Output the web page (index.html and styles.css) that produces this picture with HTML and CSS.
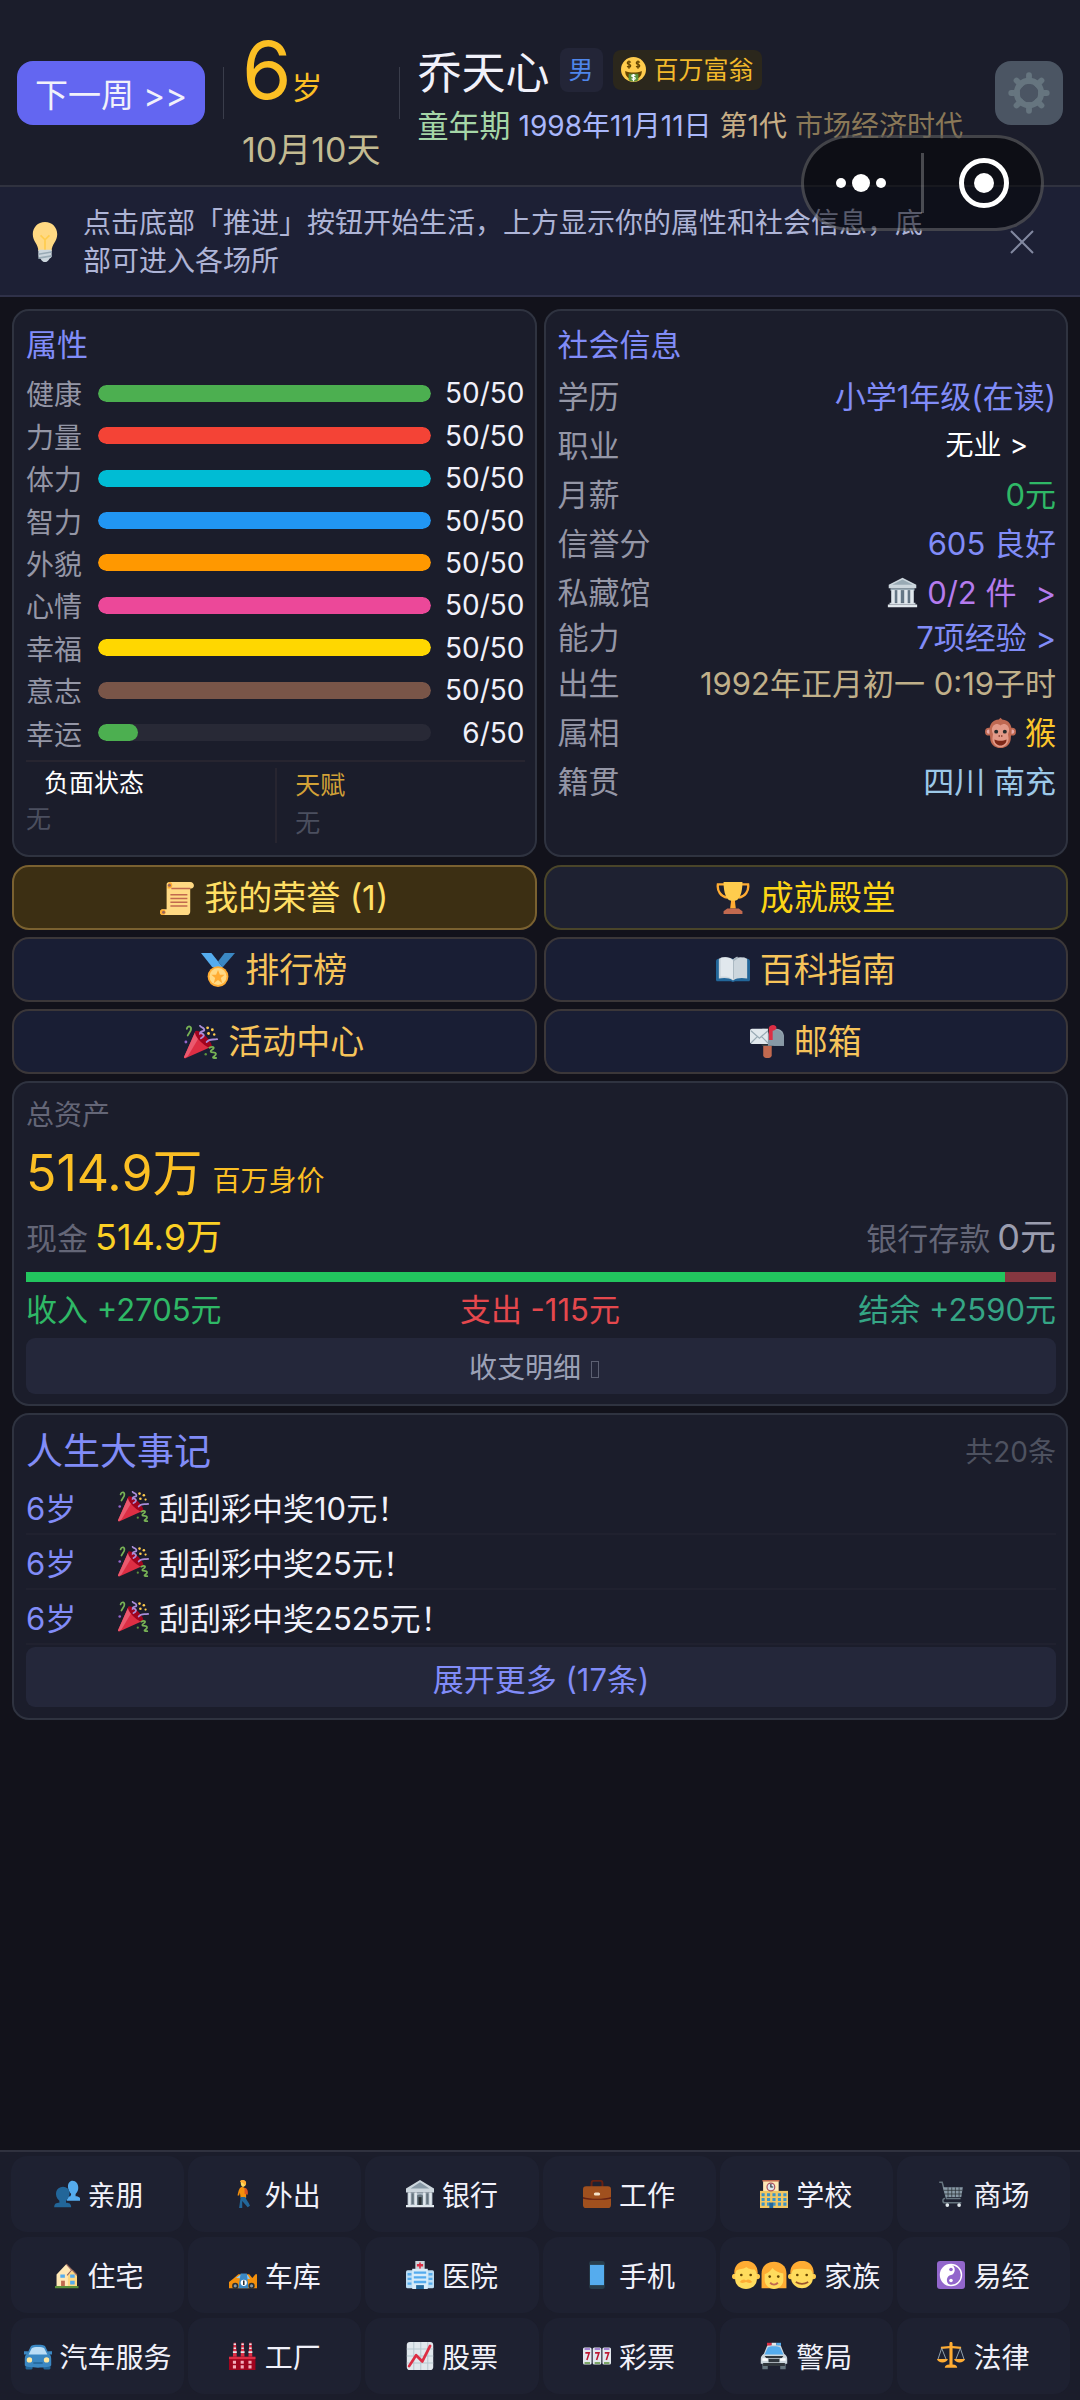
FILE: index.html
```html
<!DOCTYPE html>
<html lang="zh-CN">
<head>
  <meta charset="UTF-8">
  <title>人生模拟</title>
  <meta name="viewport" content="width=device-width, initial-scale=1.0">
  <link rel="stylesheet" href="styles.css">
</head>
<body>

<!-- 图标 -->
<svg class="sprite" aria-hidden="true">
  <symbol id="i-bulb" viewBox="0 0 36 36">
    <path fill="#ffd983" d="M29 11.1C29 5 24.500 0 18 0S7 5 7 11.100c0 6.500 5 9 5 14.900h12c0-5.900 5-8.400 5-14.900z"/>
    <path fill="none" stroke="#ffcc4d" stroke-width="1.500" d="M18 26V16l-4-4M18 16l4-4"/>
    <path fill="#ccd6dd" d="M12 25h12v6c0 1-2 2-2 2-1 2-2.500 3-4 3s-3-1-4-3c0 0-2-1-2-2z"/>
    <path stroke="#99aab5" stroke-width="1.500" d="M12 29l12-2M12 32.500l12-2"/>
  </symbol>
  <symbol id="i-money" viewBox="0 0 36 36">
    <circle cx="18" cy="18" r="18" fill="#ffcc4d"/>
    <path fill="#664500" d="M6 20c7 3 17 3 24 0 0 8-5 12-12 12S6 28 6 20z"/>
    <path fill="#5c913b" d="M11 24h14v9c-4 3-10 3-14 0z"/>
    <path fill="none" stroke="#664500" stroke-width="1.800" d="M14 8c-1-2-5-2-5 .5s5 1.500 5 4-4 3-5 .5M11.500 5v12M27 8c-1-2-5-2-5 .5s5 1.500 5 4-4 3-5 .5M24.500 5v12"/>
    <path fill="none" stroke="#fff" stroke-width="1.800" d="M20.500 27c-1-2-5-1.500-5 .3s5 1.200 5 3.200-4 2.500-5 .5M18 24.500V35"/>
  </symbol>
  <symbol id="i-gear" viewBox="0 0 36 36">
    <g stroke="#66757f" stroke-width="5" stroke-linecap="round">
      <path d="M18 2.800v5M18 28.200v5M2.800 18h5M28.200 18h5M7.300 7.300l3.500 3.500M25.200 25.200l3.500 3.500M7.300 28.700l3.500-3.500M25.200 10.800l3.500-3.500"/>
    </g>
    <circle cx="18" cy="18" r="10.500" fill="none" stroke="#66757f" stroke-width="5"/>
  </symbol>
  <symbol id="i-museum" viewBox="0 0 36 36">
    <path fill="#ccd6dd" d="M18 1l16 8v4H2V9zM3 30h30v2H3z"/>
    <path fill="#99aab5" d="M18 3l12 6H6zM4 13h28v3H4z"/>
    <path fill="#657786" d="M5 16h26v14H5z"/>
    <path fill="#e1e8ed" d="M5 15h4v16H5zM12 15h4v16h-4zM20 15h4v16h-4zM27 15h4v16h-4zM1 32h34v3H1z"/>
  </symbol>
  <symbol id="i-monkey" viewBox="0 0 36 36">
    <circle cx="4.500" cy="17" r="4.500" fill="#bf6952"/><circle cx="31.500" cy="17" r="4.500" fill="#bf6952"/>
    <circle cx="4.500" cy="17" r="2.500" fill="#e6aaaa"/><circle cx="31.500" cy="17" r="2.500" fill="#e6aaaa"/>
    <path fill="#bf6952" d="M18 1l2 2c8 1 11 6 11 13 0 3-1 5-1 8 0 7-5 12-12 12S6 31 6 24c0-3-1-5-1-8C5 9 9 3 16 3z"/>
    <path fill="#e39a88" d="M18 10c4-4 10-1 10 5 0 3-2 4-1 7 2 8-4 13-9 13s-11-5-9-13c1-3-1-4-1-7 0-6 6-9 10-5z"/>
    <circle cx="13" cy="17" r="2.300" fill="#272b2b"/><circle cx="23" cy="17" r="2.300" fill="#272b2b"/>
    <path fill="#7d2818" d="M11 26c4 2 10 2 14 0 0 4-3 7-7 7s-7-3-7-7z"/>
    <circle cx="16.500" cy="22" r=".9" fill="#662113"/><circle cx="19.500" cy="22" r=".9" fill="#662113"/>
  </symbol>
  <symbol id="i-scroll" viewBox="0 0 36 36">
    <path fill="#ffd983" d="M10 1h22c5 0 5 7 1 7h-1v24c0 2-1 4-3 4H3c-4 0-4-6 0-6h4V4c0-2 1-3 3-3z"/>
    <path fill="#ffac33" d="M10 1c4 0 4 7 0 7H8V4zM3 30c4 0 4 6 0 6s-4-6 0-6z"/>
    <circle cx="10" cy="4.500" r="1.600" fill="#99655b"/><circle cx="3.800" cy="33" r="1.600" fill="#99655b"/>
    <path stroke="#c1694f" stroke-width="1.600" d="M12 8h20M11 14.500h18M11 18.500h18M11 22.500h18M11 26.500h18"/>
  </symbol>
  <symbol id="i-trophy" viewBox="0 0 36 36">
    <path fill="none" stroke="#ffac33" stroke-width="2.500" d="M9 3.500H2c-1 7 3 13 10 14M27 3.500h7c1 7-3 13-10 14"/>
    <path fill="#ffcc4d" d="M8 1h20c0 12-3 19-8 20v6h-4v-6C11 20 8 13 8 1z"/>
    <path fill="#ffac33" d="M16 21h4l1 8h-6z"/>
    <path fill="#c1694f" d="M12 29h12l4 3v3H8v-3z"/>
  </symbol>
  <symbol id="i-medal" viewBox="0 0 36 36">
    <path fill="#55acee" d="M0 0h11l12 15H12z"/>
    <path fill="#3b88c3" d="M25 0h11L23 15l-5-6z"/>
    <circle cx="18" cy="25" r="11" fill="#ffac33"/><circle cx="18" cy="25" r="9" fill="#ffd983"/>
    <path fill="#ffac33" d="M18 18l2 5h5l-4 3.500 1.500 5.500-4.500-3.300-4.500 3.300 1.500-5.500-4-3.500h5z"/>
  </symbol>
  <symbol id="i-book" viewBox="0 0 36 36">
    <path fill="#226699" d="M0 9c0-2 1-3 3-3h30c2 0 3 1 3 3v19c0 2-1 2-3 2H20c-1 1-3 1-4 0H3c-2 0-3 0-3-2z"/>
    <path fill="#ccd6dd" d="M3 6c5-2 11-2 15 1 4-3 10-3 15-1v21c-5-1-11-1-15 2-4-3-10-3-15-2z"/>
    <path fill="#e1e8ed" d="M5 5c5-1 9-1 13 3v20c-4-3-8-3-13-3z"/>
    <path fill="#aab8c2" d="M18 8c0-2 3-4 5-4v20c-2 0-4 2-5 4z"/>
    <path fill="#ccd6dd" d="M19 9c2-3 8-4 12-4v20c-4 0-9 0-12 3z"/>
  </symbol>
  <symbol id="i-mail" viewBox="0 0 36 36">
    <path fill="#c1694f" d="M14 21h9v11c0 4-9 4-9 0z"/>
    <path fill="#99aab5" d="M13 4h15c5 0 8 4 8 9v9H13z"/>
    <path fill="#292f33" d="M12 22V10c0-9 13-9 13 0v12z"/>
    <path fill="#8899a6" d="M19 22V11c0-8 14-9 17 2v9z"/>
    <path fill="#e1e8ed" d="M0 6c0-1 1-2 2-2h17v16H2c-1 0-2-1-2-2z"/>
    <path fill="none" stroke="#99aab5" stroke-width="1.300" d="M1 6l9 8 9-8M1 19l7-7M19 19l-7-7"/>
    <path fill="#dd2e44" d="M20 3c1-4 8-4 8 0 0 2-2 3-4 3v10h-4z"/>
  </symbol>
  <symbol id="i-party" viewBox="0 0 36 36">
    <path fill="#dd2e44" d="M12 7l17 16L2 35c-1 1-2 0-2-1z"/>
    <path fill="#ea596e" d="M12 7l4 6L4 33l-3 2c-1 0-1-1-1-1z"/>
    <ellipse cx="20.500" cy="15" rx="4" ry="12" fill="#a0041e" transform="rotate(-45 20.500 15)"/>
    <path fill="none" stroke="#aa8dd8" stroke-width="2" stroke-linecap="round" d="M18 14c6-3 1-6-1-5 0-4 6-1 4-5-1-2-3-1-4-3M24 18c3-4 6-2 11-3"/>
    <path fill="none" stroke="#77b255" stroke-width="2" stroke-linecap="round" d="M3 4c1-4 6-3 4 2l-3 5M27 24c4-2 6 0 3 2s-2 3 1 3 4 2 1 4 0 2 2 2"/>
    <g fill="#ffcc4d"><circle cx="25" cy="3" r="1.500"/><circle cx="30" cy="5" r="1.500"/><circle cx="26" cy="9" r="1.500"/><circle cx="32" cy="10" r="1.300"/></g>
    <circle cx="2" cy="18" r="1.500" fill="#9266cc"/><circle cx="23" cy="31" r="1.300" fill="#5c913b"/>
  </symbol>
  <symbol id="i-people" viewBox="-3 0 38 38">
    <path fill="#55acee" d="M17 28c0-4 2-6 5-6l1-3C16 12 18 1 25 1s11 11 4 18v3c4 0 7 2 7 6z"/>
    <path fill="#226699" d="M0 37c0-5 3-6 7-6v-3C-1 21 2 9 12 9s12 12 4 19v3c4 0 7 1 7 6z"/>
  </symbol>
  <symbol id="i-walk" viewBox="0 0 36 36">
    <path fill="#ffdc5d" d="M15 2c0-3 7-2 7 2 0 3-2 5-4 5s-3-3-3-7z"/><path fill="#ffac33" d="M14 2c1-3 8-3 8 2l-1 3-3-3z"/>
    <path fill="#f4900c" d="M16 9c4-1 6 3 6 8v6h-7l-1-7-1 4h-2c1-5 2-10 5-11z"/>
    <path fill="#dd551f" d="M20 10c3 0 5 4 4 9l-4-1z"/>
    <path fill="#226699" d="M15 22h6c1 4 4 6 6 11l-3 2-7-8v9h-4z"/>
  </symbol>
  <symbol id="i-bank" viewBox="0 0 36 36">
    <path fill="#ccd6dd" d="M18 0l18 11v5H0v-5z"/><path fill="#8899a6" d="M18 3l12 8H6z"/>
    <path fill="#aab8c2" d="M2 16h32v16H2z"/>
    <path fill="#66757f" d="M7 17h3v14H7zM26 17h3v14h-3zM14 20c2-2 6-2 8 0v12h-8z"/>
    <path fill="#e1e8ed" d="M3 16h3v16H3zM11 16h3v16h-3zM22 16h3v16h-3zM30 16h3v16h-3zM0 32h36v3H0z"/>
    <path fill="#292f33" d="M16 22h4v10h-4z"/>
  </symbol>
  <symbol id="i-case" viewBox="0 0 36 36">
    <path fill="none" stroke="#662113" stroke-width="2.500" d="M11 9V4c0-2 1-3 3-3h8c2 0 3 1 3 3v5"/>
    <rect y="8" width="36" height="28" rx="4" fill="#a0501e"/>
    <path fill="#662113" d="M0 22c8 3 28 3 36 0v2c-8 2-28 2-36 0z"/>
    <rect x="14" y="16" width="8" height="4" rx="2" fill="#f5e2c8"/>
  </symbol>
  <symbol id="i-school" viewBox="0 0 36 36">
    <path fill="#ffe8b6" d="M4 0h20v16H4z"/><path fill="#c1694f" d="M3 0h22v2H3z"/>
    <path fill="#f2c762" d="M0 14h36v22H0z"/>
    <circle cx="14" cy="9" r="5" fill="#e1e8ed" stroke="#a8525f" stroke-width="1.500"/><path fill="none" stroke="#292f33" stroke-width="1.500" d="M14 5v4h3"/>
    <path stroke="#3b94c8" stroke-width="4" stroke-dasharray="4 3" d="M2 19h32M2 25h32M2 31h32"/>
    <path fill="#226699" d="M12 29h5v7h-5z"/>
  </symbol>
  <symbol id="i-cart" viewBox="-2 -1 38 38">
    <path fill="none" stroke="#66757f" stroke-width="2" d="M1 2h4l6 22h19M9 24c-4 0-4 6 0 6h22"/>
    <path fill="#8899a6" d="M6 9h27l-2 13H10z"/>
    <path stroke="#292f33" stroke-width="1" d="M7 13h25M8 18h24M13 9v13M18 9v13M23 9v13M28 9v13"/>
    <circle cx="12" cy="33" r="2.500" fill="#e1e8ed"/><circle cx="28" cy="33" r="2.500" fill="#e1e8ed"/>
  </symbol>
  <symbol id="i-house" viewBox="-4 0 37 37">
    <path fill="#5c913b" d="M0 33h31v3H0z"/>
    <path fill="#ffe8b6" d="M2 18L15 4l5 5 9 9v15H2z"/>
    <path fill="#ffd983" d="M17 19l6-6 6 6v14H17z"/>
    <path fill="none" stroke="#99655b" stroke-width="1.500" d="M15 4l7 8-6 7M23 12l6 7"/>
    <path fill="#55acee" d="M7 18h6v4H7zM20 18h6v4h-6zM20 26h6v5h-6z"/><path fill="#c1694f" d="M8 26h5v7H8z"/>
  </symbol>
  <symbol id="i-race" viewBox="0 0 36 36">
    <path fill="#f4900c" d="M0 35v-8l5-4 7-6h14l4 5 4-5h2v18z"/>
    <path fill="#8ccaf7" d="M9 22l5-4h10l3 5z"/><path fill="#3b88c3" d="M12 35l3-19h8l2 19z"/>
    <circle cx="19" cy="28" r="4" fill="#fff"/><path stroke="#292f33" stroke-width="2" d="M19 25v6"/>
    <g fill="#292f33"><circle cx="8" cy="32" r="4"/><circle cx="29" cy="32" r="4"/></g>
    <g fill="#8899a6"><circle cx="8" cy="32" r="2"/><circle cx="29" cy="32" r="2"/></g>
  </symbol>
  <symbol id="i-hospital" viewBox="0 0 36 36">
    <path fill="#ccd6dd" d="M12 0h12v11H12z"/><path fill="#dd2e44" d="M17 2h2v2h3v3h-3v3h-2V7h-3V4h3z"/>
    <rect y="12" width="36" height="23" rx="2" fill="#bbddf5"/><path fill="#d9edfa" d="M8 10h20v26H8z"/>
    <path stroke="#55acee" stroke-width="3" d="M2 17h5M2 23h5M2 29h5M29 17h5M29 23h5M29 29h5M10 15h16M10 21h16M10 27h16"/>
    <path fill="#226699" d="M13 31h10v5H13z"/>
  </symbol>
  <symbol id="i-phone" viewBox="0 0 36 36">
    <rect x="8" width="20" height="36" rx="3" fill="#283d4b"/><path fill="#55acee" d="M9 5h18v26H9z"/>
  </symbol>
  <symbol id="i-man" viewBox="0 0 36 36">
    <circle cx="3.500" cy="20" r="3.500" fill="#ffcc4d"/><circle cx="32.500" cy="20" r="3.500" fill="#ffcc4d"/>
    <path fill="#ffdc5d" d="M4 13C4-1 32-1 32 13v10c0 8-7 13-14 13S4 31 4 23z"/>
    <path fill="#ffac33" d="M3 17C1-6 35-6 33 17l-4-6c-8 0-9-3-11-3-4 3-9 2-12 4z"/>
    <circle cx="12" cy="18" r="1.700" fill="#664500"/><circle cx="24" cy="18" r="1.700" fill="#664500"/>
    <path fill="#ffac33" d="M10 27c3-4 6-4 8-2 2-2 5-2 8 2-3 2-6 1-8 0-2 1-5 2-8 0z"/>
  </symbol>
  <symbol id="i-woman" viewBox="0 0 36 36">
    <path fill="#ffac33" d="M2 35V16C2-4 34-4 34 16v19z"/>
    <path fill="#ffdc5d" d="M6 17c5-2 8-5 10-8 3 4 8 6 14 7v8c0 7-6 12-12 12S6 31 6 24z"/>
    <circle cx="12.500" cy="20" r="1.700" fill="#664500"/><circle cx="23.500" cy="20" r="1.700" fill="#664500"/>
    <path fill="none" stroke="#c1694f" stroke-width="2.500" d="M13 28c3 3 7 3 10 0"/>
  </symbol>
  <symbol id="i-boy" viewBox="0 0 36 36">
    <circle cx="3.500" cy="20" r="3.500" fill="#ffcc4d"/><circle cx="32.500" cy="20" r="3.500" fill="#ffcc4d"/>
    <path fill="#ffdc5d" d="M4 13C4-1 32-1 32 13v9c0 8-7 13-14 13S4 30 4 22z"/>
    <path fill="#ffac33" d="M3 17C1-6 35-6 33 17l-4-6c-9-1-15-2-22 0z"/>
    <circle cx="12" cy="18" r="1.700" fill="#664500"/><circle cx="24" cy="18" r="1.700" fill="#664500"/>
    <path fill="none" stroke="#99552d" stroke-width="2" d="M10 27c5 3 11 3 16 0"/>
  </symbol>
  <symbol id="i-yinyang" viewBox="0 0 36 36">
    <rect width="36" height="36" rx="4" fill="#9266cc"/>
    <circle cx="18" cy="18" r="13.500" fill="none" stroke="#fff" stroke-width="1.800"/>
    <path fill="#fff" d="M18 4.500a13.500 13.500 0 000 27c-8-3-6-13 0-13.500 6-1 7-11 0-13.500z"/>
    <circle cx="18" cy="11" r="2.300" fill="#9266cc"/><circle cx="18" cy="25" r="2.300" fill="#fff"/>
  </symbol>
  <symbol id="i-car" viewBox="0 0 36 36">
    <path fill="#226699" d="M2 28h9v6c0 2-9 2-9 0zM25 28h9v6c0 2-9 2-9 0z"/>
    <path fill="#3b88c3" d="M9 5c2-2 16-2 18 0l5 10c3 2 3 5 3 8v7c-1 4-33 4-34 0v-7c0-3 0-6 3-8z"/>
    <path fill="#bbddf5" d="M10 8c2-2 14-2 16 0l4 8H6z"/>
    <path fill="#3b88c3" d="M0 12h5v4H0zM31 12h5v4h-5z"/>
    <circle cx="7" cy="23" r="3.500" fill="#ffe8a0"/><circle cx="29" cy="23" r="3.500" fill="#ffe8a0"/>
    <path stroke="#226699" stroke-width="2" d="M12 27h12"/>
  </symbol>
  <symbol id="i-factory" viewBox="0 0 36 36">
    <path fill="#dd2e44" d="M5 19L6 1h3l1 18zM15 19l1-18h3l1 18zM25 19l1-18h3l1 18z"/>
    <path fill="none" stroke="#e1e8ed" stroke-width="2" d="M6 3h3M6 8h3M5 13h5M16 3h3M16 8h3M15 13h5M26 3h3M26 8h3M25 13h5"/>
    <path fill="#a0041e" d="M0 19h34v17H0z"/><path fill="#dd2e44" d="M0 19h34v3H0z"/>
    <path stroke="#f4abba" stroke-width="4" stroke-dasharray="4 6" d="M5 26h24M5 32h24"/>
  </symbol>
  <symbol id="i-chart" viewBox="0 0 36 36">
    <rect x="1" y="0" width="34" height="36" rx="4" fill="#e1e8ed"/>
    <path stroke="#b8c7d0" stroke-width="1.300" d="M1 9h34M1 18h34M1 27h34M10 0v36M19 0v36M28 0v36"/>
    <path fill="none" stroke="#dd2e44" stroke-width="3.500" stroke-linecap="round" stroke-linejoin="round" d="M4 31l9-14 8 8L31 5"/>
  </symbol>
  <symbol id="i-slots" viewBox="0 0 36 36">
    <rect y="7" width="11" height="22" rx="2" fill="#e1e8ed"/><rect x="12.500" y="7" width="11" height="22" rx="2" fill="#e1e8ed"/><rect x="25" y="7" width="11" height="22" rx="2" fill="#e1e8ed"/>
    <path stroke="#9266cc" stroke-width="2" d="M2 9h7M15 9h7M27 9h7"/>
    <path stroke="#5c913b" stroke-width="2" d="M2 27h7M15 27h7M27 27h7"/>
    <path fill="none" stroke="#be1931" stroke-width="2" d="M3 14h5L5 23M15.500 14h5l-3 9M28 14h5l-3 9"/>
  </symbol>
  <symbol id="i-police" viewBox="0 0 36 36">
    <path fill="#dd2e44" d="M9 1h6v4H9z"/><path fill="#e1e8ed" d="M15 1h6v4h-6z"/><path fill="#55acee" d="M21 1h6v4h-6z"/>
    <path fill="#66757f" d="M3 27h7v8H3zM26 27h7v8h-7z"/>
    <path fill="#ccd6dd" d="M9 5c2-1 16-1 18 0l4 10c3 2 4 4 4 7v6H1v-6c0-3 1-5 4-7z"/>
    <path fill="#55acee" d="M10 7c3-2 13-2 16 0l4 9H6z"/>
    <path fill="#31373d" d="M6 18h24l-2 3H8zM4 27h28v4H4zM11 22h14v4H11z"/>
    <path fill="#fff" d="M3 21h7v3H3zM26 21h7v3h-7z"/>
  </symbol>
  <symbol id="i-scales" viewBox="0 0 36 36">
    <path fill="#ffac33" d="M16 2c0-3 4-3 4 0v3l11 1v3l-11-1v21c4 0 6 2 6 4H10c0-2 2-4 6-4V8L5 9V6l11-1z"/>
    <path fill="none" stroke="#99aab5" stroke-width="1.200" d="M6 8L1 23M6 8l6 15M30 8l-6 15M30 8l5 15"/>
    <path fill="#ffac33" d="M0 22h14c-1 6-13 6-14 0zM22 22h14c-1 6-13 6-14 0z"/>
  </symbol>
</svg>

<header class="topbar">
  <button class="next-btn">下一周 &gt;&gt;</button>
  <span class="divider"></span>
  <div class="age">
    <div class="age-num">6<small>岁</small></div>
    <div class="age-date">10月10天</div>
  </div>
  <span class="divider"></span>
  <div class="profile">
    <div class="profile-main">
      <h1 class="name">乔天心</h1>
      <span class="gender">男</span>
      <span class="badge"><svg class="icon"><use href="#i-money"/></svg>百万富翁</span>
    </div>
    <div class="profile-sub">
      <span class="stage">童年期</span>
      <span class="date">1998年11月11日</span>
      <span class="generation">第1代</span>
      <span class="era">市场经济时代</span>
    </div>
  </div>
  <button class="gear-btn" aria-label="设置"><svg class="icon"><use href="#i-gear"/></svg></button>
  <div class="capsule">
    <button aria-label="更多">
      <svg width="50" height="20" viewBox="0 0 50 20" fill="#fff"><circle cx="5" cy="10" r="5"/><circle cx="25" cy="10" r="9"/><circle cx="45" cy="10" r="5"/></svg>
    </button>
    <button aria-label="关闭小程序">
      <svg width="50" height="50" viewBox="0 0 50 50" fill="#fff"><circle cx="25" cy="25" r="22.500" fill="none" stroke="#fff" stroke-width="5"/><circle cx="25" cy="25" r="10"/></svg>
    </button>
  </div>
</header>

<div class="tip">
  <svg class="icon tip-icon"><use href="#i-bulb"/></svg>
  <p>点击底部「推进」按钮开始生活，上方显示你的属性和社会信息，底部可进入各场所</p>
  <button class="tip-close" aria-label="关闭提示">
    <svg width="24" height="24" viewBox="0 0 24 24"><path d="M1 1l22 22M23 1L1 23" stroke="#8288a0" stroke-width="2"/></svg>
  </button>
</div>

<main class="content">
  <div class="columns">
    <section class="card">
      <h2 class="card-title">属性</h2>
      <ul class="stats">
        <li><span>健康</span><div class="bar"><div class="fill green" style="width: 100%"></div></div><b>50/50</b></li>
        <li><span>力量</span><div class="bar"><div class="fill red" style="width: 100%"></div></div><b>50/50</b></li>
        <li><span>体力</span><div class="bar"><div class="fill cyan" style="width: 100%"></div></div><b>50/50</b></li>
        <li><span>智力</span><div class="bar"><div class="fill blue" style="width: 100%"></div></div><b>50/50</b></li>
        <li><span>外貌</span><div class="bar"><div class="fill orange" style="width: 100%"></div></div><b>50/50</b></li>
        <li><span>心情</span><div class="bar"><div class="fill pink" style="width: 100%"></div></div><b>50/50</b></li>
        <li><span>幸福</span><div class="bar"><div class="fill yellow" style="width: 100%"></div></div><b>50/50</b></li>
        <li><span>意志</span><div class="bar"><div class="fill brown" style="width: 100%"></div></div><b>50/50</b></li>
        <li><span>幸运</span><div class="bar"><div class="fill green" style="width: 12%"></div></div><b>6/50</b></li>
      </ul>
      <div class="extras">
        <div class="extra">
          <button class="debuff-btn">负面状态</button>
          <p class="empty">无</p>
        </div>
        <div class="extra">
          <h3 class="talent">天赋</h3>
          <p class="empty">无</p>
        </div>
      </div>
    </section>

    <section class="card">
      <h2 class="card-title">社会信息</h2>
      <dl class="info">
        <div><dt>学历</dt><dd class="indigo">小学1年级(在读)</dd></div>
        <div><dt>职业</dt><dd><button class="job-btn">无业 &gt;</button></dd></div>
        <div><dt>月薪</dt><dd class="money">0元</dd></div>
        <div><dt>信誉分</dt><dd class="indigo">605 良好</dd></div>
        <div><dt>私藏馆</dt><dd><a href="#" class="purple"><svg class="icon"><use href="#i-museum"/></svg>0/2 件 <i>&gt;</i></a></dd></div>
        <div class="tight"><dt>能力</dt><dd><a href="#" class="indigo">7项经验 &gt;</a></dd></div>
        <div><dt>出生</dt><dd class="tan">1992年正月初一 0:19子时</dd></div>
        <div><dt>属相</dt><dd class="gold"><svg class="icon"><use href="#i-monkey"/></svg>猴</dd></div>
        <div><dt>籍贯</dt><dd class="sky">四川 南充</dd></div>
      </dl>
    </section>
  </div>

  <div class="links">
    <button class="link-btn honor"><svg class="icon"><use href="#i-scroll"/></svg>我的荣誉 (1)</button>
    <button class="link-btn hall"><svg class="icon"><use href="#i-trophy"/></svg>成就殿堂</button>
    <button class="link-btn"><svg class="icon"><use href="#i-medal"/></svg>排行榜</button>
    <button class="link-btn"><svg class="icon"><use href="#i-book"/></svg>百科指南</button>
    <button class="link-btn"><svg class="icon"><use href="#i-party"/></svg>活动中心</button>
    <button class="link-btn"><svg class="icon"><use href="#i-mail"/></svg>邮箱</button>
  </div>

  <section class="card assets">
    <h2 class="assets-label">总资产</h2>
    <div class="total">514.9万<small>百万身价</small></div>
    <div class="row cash">
      <span>现金<b class="cash-num">514.9万</b></span>
      <span>银行存款<b>0元</b></span>
    </div>
    <div class="flow"><div class="flow-in" style="width: 95%"></div></div>
    <div class="row flow-text">
      <span class="money">收入 +2705元</span>
      <span class="expense">支出 -115元</span>
      <span class="balance">结余 +2590元</span>
    </div>
    <button class="wide-btn detail-btn">收支明细 <span class="caret"></span></button>
  </section>

  <section class="card events">
    <div class="row events-head">
      <h2>人生大事记</h2>
      <span>共20条</span>
    </div>
    <ul class="event-list">
      <li><span>6岁</span><svg class="icon"><use href="#i-party"/></svg>刮刮彩中奖10元！</li>
      <li><span>6岁</span><svg class="icon"><use href="#i-party"/></svg>刮刮彩中奖25元！</li>
      <li><span>6岁</span><svg class="icon"><use href="#i-party"/></svg>刮刮彩中奖2525元！</li>
    </ul>
    <button class="wide-btn more-btn">展开更多 (17条)</button>
  </section>
</main>

<nav class="places">
  <button><svg class="icon"><use href="#i-people"/></svg>亲朋</button>
  <button><svg class="icon"><use href="#i-walk"/></svg>外出</button>
  <button><svg class="icon"><use href="#i-bank"/></svg>银行</button>
  <button><svg class="icon"><use href="#i-case"/></svg>工作</button>
  <button><svg class="icon"><use href="#i-school"/></svg>学校</button>
  <button><svg class="icon"><use href="#i-cart"/></svg>商场</button>
  <button><svg class="icon"><use href="#i-house"/></svg>住宅</button>
  <button><svg class="icon"><use href="#i-race"/></svg>车库</button>
  <button><svg class="icon"><use href="#i-hospital"/></svg>医院</button>
  <button><svg class="icon"><use href="#i-phone"/></svg>手机</button>
  <button><span class="family"><svg class="icon"><use href="#i-man"/></svg><svg class="icon"><use href="#i-woman"/></svg><svg class="icon"><use href="#i-boy"/></svg></span>家族</button>
  <button><svg class="icon"><use href="#i-yinyang"/></svg>易经</button>
  <button><svg class="icon"><use href="#i-car"/></svg>汽车服务</button>
  <button><svg class="icon"><use href="#i-factory"/></svg>工厂</button>
  <button><svg class="icon"><use href="#i-chart"/></svg>股票</button>
  <button><svg class="icon"><use href="#i-slots"/></svg>彩票</button>
  <button><svg class="icon"><use href="#i-police"/></svg>警局</button>
  <button><svg class="icon"><use href="#i-scales"/></svg>法律</button>
</nav>

</body>
</html>
```
FILE: styles.css
```css
* {
  box-sizing: border-box;
}
html, body {
  height: 100%;
  margin: 0;
}
body {
  display: flex;
  flex-direction: column;
  min-height: 100vh;
  background: #12121b;
  color: #f1f1fa;
  font-family: Inter, "Noto Sans CJK SC", sans-serif;
  font-size: 28px;
}
h1, h2, h3, p, ul, dl, dd {
  margin: 0;
  padding: 0;
  font-weight: 400;
}
ul {
  list-style: none;
}
b, i {
  font-weight: 400;
  font-style: normal;
}
a {
  color: inherit;
  text-decoration: none;
}
button {
  margin: 0;
  padding: 0;
  border: none;
  background: none;
  color: inherit;
  font: inherit;
  white-space: nowrap;
  cursor: pointer;
}
.sprite {
  position: absolute;
  width: 0;
  height: 0;
}
.icon {
  width: 1em;
  height: 1em;
  flex: none;
}
.row {
  display: flex;
  align-items: center;
  justify-content: space-between;
}

/* header */
.topbar {
  position: relative;
  display: flex;
  align-items: center;
  gap: 18px;
  height: 187px;
  padding: 0 17px;
  background: #1b1d2b;
  border-bottom: 2px solid #30323f;
  white-space: nowrap;
}
.next-btn {
  flex: none;
  width: 188px;
  height: 64px;
  border-radius: 16px;
  background: #6366f1;
  font-size: 33px;
}
.divider {
  width: 1px;
  height: 52px;
  background: #3a3d4b;
}
.age-num {
  color: #fbbf24;
  font-size: 80px;
  line-height: 114px;
}
.age-num small {
  font-size: 31px;
  line-height: 1;
}
.age-date {
  color: #c3bb92;
  font-size: 34px;
  line-height: 46px;
}
.profile {
  flex: 1;
}
.profile-main {
  display: flex;
  align-items: center;
  gap: 10px;
  height: 66px;
}
.name {
  font-size: 44px;
}
.gender {
  padding: 0 9px;
  border-radius: 8px;
  background: #232537;
  color: #4f86ea;
  font-size: 25px;
  line-height: 44px;
}
.badge {
  display: flex;
  align-items: center;
  gap: 8px;
  padding: 0 8px;
  border-radius: 8px;
  background: #2b271c;
  color: #f2b92b;
  font-size: 25px;
  line-height: 40px;
}
.profile-sub {
  display: flex;
  gap: 8px;
  line-height: 46px;
}
.stage {
  color: #a5d6a7;
  font-size: 31px;
}
.date {
  color: #a9b7fb;
}
.generation {
  color: #c6ad85;
}
.era {
  color: #8a7857;
}
.gear-btn {
  display: flex;
  align-items: center;
  justify-content: center;
  width: 68px;
  height: 64px;
  border-radius: 16px;
  background: #4b5563;
  font-size: 42px;
}
.capsule {
  position: absolute;
  top: 135px;
  right: 36px;
  z-index: 10;
  display: flex;
  width: 243px;
  height: 96px;
  border: 3px solid rgba(255, 255, 255, .22);
  border-radius: 48px;
  background: rgba(0, 0, 0, .5);
}
.capsule button {
  display: flex;
  flex: 1;
  align-items: center;
  justify-content: center;
  padding-right: 4px;
}
.capsule button + button {
  position: relative;
  padding: 0 0 0 4px;
}
.capsule button + button::before {
  content: "";
  position: absolute;
  left: -2px;
  top: 15px;
  bottom: 15px;
  width: 3px;
  background: rgba(255, 255, 255, .25);
}

/* tip */
.tip {
  display: flex;
  align-items: center;
  height: 110px;
  padding: 2px 46px 0 25px;
  background: #1d2035;
  border-bottom: 2px solid #2f3149;
  color: #aeb4d6;
  line-height: 38px;
}
.tip-icon {
  width: 40px;
  height: 40px;
  margin-right: 18px;
}
.tip p {
  flex: 1;
  padding-right: 76px;
}
.tip-close {
  display: flex;
}

/* cards */
.content {
  flex: 1;
  display: flex;
  flex-direction: column;
  gap: 7px;
  padding: 12px;
}
.columns,
.links {
  display: grid;
  grid-template-columns: 1fr 1fr;
  gap: 7px;
}
.card {
  padding: 14px 10px 12px 12px;
  border: 2px solid #2f3340;
  border-radius: 17px;
  background: #1b1d2b;
}
.card-title {
  margin-bottom: 7px;
  color: #818cf8;
  font-size: 31px;
  line-height: 40px;
}
.stats {
  display: grid;
  grid-auto-rows: 1fr;
  height: 382px;
}
.stats li {
  display: flex;
  align-items: center;
}
.stats span {
  width: 72px;
  color: #9496a6;
}
.stats b {
  width: 94px;
  text-align: right;
}
.bar {
  flex: 1;
  height: 17px;
  border-radius: 9px;
  background: #282936;
  overflow: hidden;
}
.fill {
  height: 100%;
  border-radius: 9px;
}
.green { background: #4caf50; }
.red { background: #f44336; }
.cyan { background: #00bcd4; }
.blue { background: #2196f3; }
.orange { background: #ff9800; }
.pink { background: #ec4899; }
.yellow { background: #ffd700; }
.brown { background: #795548; }

.extras {
  display: grid;
  grid-template-columns: 1fr 1fr;
  margin-top: 6px;
  padding-top: 6px;
  border-top: 2px solid #272530;
  font-size: 25px;
}
.extra + .extra {
  padding-left: 18px;
  border-left: 2px solid #272530;
}
.debuff-btn {
  display: block;
  padding: 0 18px;
  color: #fff;
  line-height: 31px;
}
.talent {
  color: #d3a237;
  font-size: 25px;
  line-height: 35px;
}
.empty {
  color: #4b4f5f;
  line-height: 40px;
}

.info {
  font-size: 31px;
  line-height: 49px;
}
.info div {
  display: flex;
  justify-content: space-between;
}
.info .tight {
  line-height: 42px;
}
.info dt {
  color: #9496a6;
}
.info dd,
.info a {
  display: flex;
  align-items: center;
  gap: 9px;
}
.info i {
  margin-left: 10px;
}
.job-btn {
  padding-right: 28px;
  color: #fff;
  font-size: 28px;
}
.indigo { color: #818cf8; }
.money { color: #2fb866; }
.purple { color: #b57bee; }
.tan { color: #c0b08a; }
.gold { color: #fbc62c; }
.sky { color: #9dc9e8; }

/* links */
.links {
  margin: 1px 0 0;
}
.link-btn {
  display: flex;
  align-items: center;
  justify-content: center;
  gap: 10px;
  height: 65px;
  border: 2px solid #3b3739;
  border-radius: 17px;
  background: #191e34;
  color: #f6c45a;
  font-size: 34px;
  line-height: 40px;
}
.link-btn.honor {
  border-color: #7a6130;
  background: #3c2f13;
  color: #ffdf64;
}
.link-btn.hall {
  border-color: #4a4529;
  background: #1e2131;
  color: #fcd516;
}

/* assets */
.assets {
  padding: 12px 10px 10px 12px;
}
.assets-label {
  color: #646677;
  font-size: 28px;
  line-height: 40px;
}
.total {
  color: #fbbf24;
  font-size: 50px;
  line-height: 76px;
}
.total small {
  margin-left: 10px;
  font-size: 28px;
  line-height: 1;
}
.cash {
  color: #646677;
  font-size: 31px;
  line-height: 56px;
}
.cash b {
  margin-left: 7px;
  color: #9b9daf;
  font-size: 36px;
  line-height: 1;
}
.cash .cash-num {
  color: #fbd024;
}
.flow {
  height: 10px;
  margin: 5px 0 6px;
  background: #863740;
}
.flow-in {
  height: 100%;
  background: #22c55e;
}
.flow-text {
  font-size: 31px;
  line-height: 44px;
}
.expense { color: #e5484d; }
.balance { color: #35a585; }
.wide-btn {
  display: block;
  width: 100%;
  border-radius: 9px;
  background: #24273a;
}
.detail-btn {
  height: 56px;
  margin-top: 6px;
  color: #9ba1b6;
}
.caret {
  display: inline-block;
  width: 8px;
  height: 17px;
  margin: 0 14px 0 2px;
  border: 1px solid #5c6072;
}

/* events */
.events {
  padding: 9px 10px 11px 12px;
}
.events-head {
  color: #4e5260;
  line-height: 56px;
}
.events-head h2 {
  color: #818cf8;
  font-size: 37px;
}
.event-list li {
  display: flex;
  align-items: center;
  gap: 10px;
  height: 55px;
  border-bottom: 2px solid #20212f;
  font-size: 31px;
}
.event-list span {
  width: 82px;
  color: #818cf8;
}
.more-btn {
  height: 60px;
  margin-top: 2px;
  color: #818cf8;
  font-size: 31px;
}

/* bottom nav */
.places {
  display: grid;
  grid-template-columns: repeat(6, 1fr);
  gap: 5px 4px;
  padding: 4px 10px 6px 11px;
  background: #1b1d2b;
  border-top: 2px solid #30323f;
}
.places button {
  display: flex;
  align-items: center;
  justify-content: center;
  gap: 8px;
  height: 76px;
  border-radius: 16px;
  background: #1e2131;
}
.family {
  display: flex;
}
```
